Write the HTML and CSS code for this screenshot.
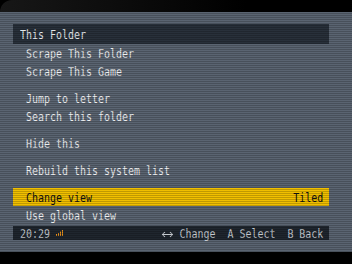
FILE: index.html
```html
<!DOCTYPE html>
<html>
<head>
<meta charset="utf-8">
<link rel="stylesheet" href="styles.css">
</head>
<body>
<div class="top"></div>
<div class="screen">
  <div class="header"><span class="t">This Folder</span></div>
  <div class="group">
    <div class="item"><span class="t">Scrape This Folder</span></div>
    <div class="item"><span class="t">Scrape This Game</span></div>
  </div>
  <div class="group">
    <div class="item"><span class="t">Jump to letter</span></div>
    <div class="item"><span class="t">Search this folder</span></div>
  </div>
  <div class="group">
    <div class="item"><span class="t">Hide this</span></div>
  </div>
  <div class="group">
    <div class="item"><span class="t">Rebuild this system list</span></div>
  </div>
  <div class="group">
    <div class="item selected"><span class="t">Change view</span><span class="t r">Tiled</span></div>
    <div class="item"><span class="t">Use global view</span></div>
  </div>
  <div class="footer">
    <div class="clock"><span>20:29</span>
      <svg class="signal" width="10.4" height="6" viewBox="0 0 8 6" preserveAspectRatio="none"><rect x="0" y="4" width="1" height="2"/><rect x="2" y="3" width="1" height="3"/><rect x="4" y="1.5" width="1" height="4.5"/><rect x="6" y="0" width="1" height="6"/></svg>
    </div>
    <div class="hints"><svg class="arrow" width="15.7" height="7" viewBox="0 0 12 7" preserveAspectRatio="none"><path d="M1 3.5H11M3.5 1L1 3.5L3.5 6M8.5 1L11 3.5L8.5 6" fill="none" stroke="#c4c9cf" stroke-width="1"/></svg><span class="txt"> Change  A Select  B Back</span></div>
  </div>
  <div class="scan"></div>
</div>
</body>
</html>
```
FILE: styles.css
```css
html, body {
  margin: 0;
  padding: 0;
  background: #000;
}
body {
  width: 352px;
  height: 264px;
  overflow: hidden;
  font-family: "DejaVu Sans Mono", monospace;
  font-size: 13px;
}
.t {
  display: inline-block;
  white-space: pre;
  transform: scaleX(0.766);
  transform-origin: left center;
}
.t.r {
  transform-origin: right center;
}
.top {
  height: 12px;
  border-top-left-radius: 12px;
  background: linear-gradient(to right, #171717, #0a0a0a 40%, #000 70%);
}
.screen {
  position: relative;
  height: 240px;
  box-sizing: border-box;
  padding: 12px 23px 12px 13px;
  background: #5a6471;
  display: flex;
  flex-direction: column;
}
.header {
  height: 20px;
  box-sizing: border-box;
  padding: 1px 0 0 7px;
  line-height: 19px;
  background: #28303a;
  color: #e4e8ec;
}
.group {
  display: flex;
  flex-direction: column;
}
.group + .group {
  margin-top: 9px;
}
.item {
  height: 18px;
  box-sizing: border-box;
  padding: 1px 6px 0 13px;
  line-height: 17px;
  color: #eef0f2;
  display: flex;
  justify-content: space-between;
}
.item.selected {
  background: #f0bf00;
  color: #111;
}
.footer {
  margin-top: 2px;
  height: 14px;
  box-sizing: border-box;
  padding: 2px 6px 0 7px;
  line-height: 12px;
  background: #1f262e;
  color: #c4c9cf;
  display: flex;
  justify-content: space-between;
}
.clock {
  display: flex;
  align-items: flex-start;
  transform: scaleX(0.766);
  transform-origin: left center;
}
.signal {
  fill: #e8921c;
  margin: 2px 0 0 7.8px;
}
.hints {
  display: flex;
  align-items: flex-start;
  transform: scaleX(0.766);
  transform-origin: right center;
}
.arrow {
  margin-top: 3px;
}
.txt {
  white-space: pre;
}
.scan {
  position: absolute;
  inset: 0;
  pointer-events: none;
  background: repeating-linear-gradient(to bottom, rgba(0,0,0,0) 0 1px, rgba(0,0,0,0.2) 1px 2px);
}
```
